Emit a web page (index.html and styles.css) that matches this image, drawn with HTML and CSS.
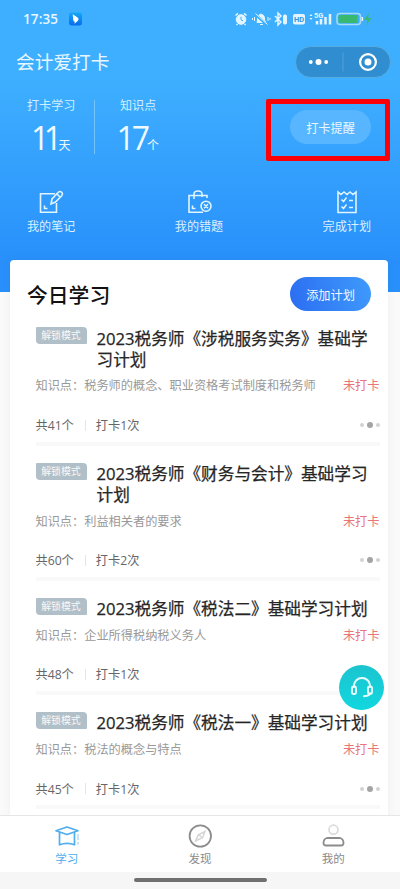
FILE: index.html
```html
<!DOCTYPE html>
<html lang="zh-CN">
<head>
<meta charset="utf-8">
<meta name="viewport" content="width=device-width">
<title>会计爱打卡</title>
<link rel="stylesheet" href="styles.css">
</head>
<body>
<main class="screen">
  <header class="hero">
    <div class="status">
      <span class="time">17:35</span>
      <svg class="app" viewBox="0 0 14 14"><defs><linearGradient id="ag" x2="0" y2="1"><stop stop-color="#12a9f8"/><stop offset="1" stop-color="#086bed"/></linearGradient></defs><rect width="14" height="14" rx="3" fill="url(#ag)"/><path d="M4 2 9 5.2 10.5 7 9 9.5 6 12 6.2 9.7 5 9.3 4.5 7.2Z" fill="#fff"/></svg>
      <svg class="signals" viewBox="0 0 140 16" fill="none" stroke="#e2f5ff">
        <circle cx="8" cy="8.5" r="4.8" fill="#e2f5ff"/><path d="M2.5 4.5 5 2.3M13.5 4.5 11 2.3M4.5 13l-1 1M11.5 13l1 1" stroke-width="1.6"/><path d="M8 5.8v3l2 1" stroke="#3eafff"/>
        <path d="M24 11.500h9L31.500 9V7q0-3-3.500-4-3.500 1-3.500 4v2z" fill="#e2f5ff"/><path d="M22 3 34 14" stroke="#3eafff" stroke-width="2.500"/><path d="M22.500 2.500 34.500 13.500M27 13.500h3M21.500 6v4M19.500 7v2M35 6v4M37 7v2"/>
        <path d="m42 5 6 6-3 3V2l3 3-6 6" stroke-width="1.500"/><rect x="50.500" y="4" width="3" height="9" rx="1" fill="#e2f5ff"/>
        <rect x="60" y="3" width="12" height="10.500" rx="2" fill="#e2f5ff" stroke="none"/><text x="60.900" y="11" class="hd">HD</text>
        <path d="m76.500 5 1.500-2 1.500 2zM76.500 7 78 9l1.500-2z" fill="#e2f5ff" stroke="none"/><text x="81" y="7.300" class="fiveg">5G</text>
        <path d="M84 13.500V10M88 13.500V8M92.500 13.500V6M97 13.500V3" stroke-width="2.500"/>
        <rect x="104" y="2.500" width="23.500" height="11" rx="3" stroke="#a6daf5" stroke-width="1.500"/><rect x="105.500" y="4" width="19" height="8" rx="1.500" fill="#39b970" stroke="none"/><path d="M129.300 6v4" stroke-width="1.500"/><path d="m136 2-5 7h3.500l-1 5 5-7H135z" fill="#39b970" stroke="none"/>
      </svg>
    </div>
    <div class="topbar">
      <h1>会计爱打卡</h1>
      <div class="capsule">
        <svg viewBox="0 0 96 32" fill="#fff"><circle cx="15.800" cy="16" r="1.900"/><circle cx="23.500" cy="16" r="3"/><circle cx="31.200" cy="16" r="1.900"/><path d="M47.500 6.500h1v19h-1z" opacity=".18"/><circle cx="73" cy="16" r="7.900" fill="none" stroke="#fff" stroke-width="2.200"/><circle cx="73" cy="16" r="3.500"/></svg>
      </div>
    </div>
    <div class="stats">
      <div class="stat days"><span>打卡学习</span><p><b>11</b>天</p></div>
      <div class="rule"></div>
      <div class="stat points"><span>知识点</span><p><b>17</b>个</p></div>
      <div class="remind">打卡提醒</div>
    </div>
    <nav class="tools">
      <div><svg viewBox="0 0 26 26"><path d="M17 4.700H2.500v18.600h16V14"/><path d="m13 15 1-5 6.300-6.700q1.700-1.600 3.400 0 1.400 1.700 0 3.400L17.500 13zM19 5l3 3"/><path d="M6.500 16.500v3h3"/></svg>我的笔记</div>
      <div><svg viewBox="0 0 26 26"><path d="M21 9V6.500H3v16.800h14M8 10V5q0-3 4-3t4 3v3"/><circle cx="20" cy="17.200" r="5"/><path d="m18 15.200 4 4m0-4-4 4M6.500 16.500v3h3"/></svg>我的错题</div>
      <div><svg viewBox="0 0 26 26"><path d="M4 3v20.500h18V3l-3 2.500L16 3l-3 2.500L10 3 7 5.500ZM7.500 10.500l2 2 3-4M7.500 17.500l2 2 3-4M15 11.500h4M15 18.500h4"/></svg>完成计划</div>
    </nav>
    <div class="highlight"></div>
  </header>

  <section class="card">
    <div class="cardhead"><h2>今日学习</h2><div class="add">添加计划</div></div>
    <article>
      <div class="head"><span class="tag">解锁模式</span><h3>2023税务师《涉税服务实务》基础学习计划</h3></div>
      <div class="desc"><span>知识点：税务师的概念、职业资格考试制度和税务师</span><em>未打卡</em></div>
      <div class="foot"><span>共41个</span><i></i><span>打卡1次</span><div class="dots"><u></u><u></u><u></u></div></div>
    </article>
    <article>
      <div class="head"><span class="tag">解锁模式</span><h3>2023税务师《财务与会计》基础学习计划</h3></div>
      <div class="desc"><span>知识点：利益相关者的要求</span><em>未打卡</em></div>
      <div class="foot"><span>共60个</span><i></i><span>打卡2次</span><div class="dots"><u></u><u></u><u></u></div></div>
    </article>
    <article>
      <div class="head"><span class="tag">解锁模式</span><h3>2023税务师《税法二》基础学习计划</h3></div>
      <div class="desc"><span>知识点：企业所得税纳税义务人</span><em>未打卡</em></div>
      <div class="foot"><span>共48个</span><i></i><span>打卡1次</span></div>
    </article>
    <article>
      <div class="head"><span class="tag">解锁模式</span><h3>2023税务师《税法一》基础学习计划</h3></div>
      <div class="desc"><span>知识点：税法的概念与特点</span><em>未打卡</em></div>
      <div class="foot"><span>共45个</span><i></i><span>打卡1次</span><div class="dots"><u></u><u></u><u></u></div></div>
    </article>
  </section>

  <div class="service"><svg viewBox="0 0 24 24" fill="none" stroke="#e9ffff" stroke-width="1.900"><path d="M4 11V9.500a8 7.500 0 0 1 16 0V11M20 17q0 3-6 3.200" stroke-linecap="round"/><rect x="2" y="10.500" width="4" height="7.500" rx="1.500"/><rect x="18" y="10.500" width="4" height="7.500" rx="1.500"/></svg></div>

  <footer class="bottom">
    <div class="tabs">
      <div class="tab on"><svg viewBox="0 0 26 26" fill="none" stroke="#50aeee" stroke-width="1.700" stroke-linejoin="round"><path d="M2 7.800 13 4l11 3.800L13 11.500ZM5.500 9.500v12.300q7.500-3 15 0V9.500"/><path d="M24 11v6m0 2v2.500" stroke="#b5dbf7" stroke-width="1.500"/></svg>学习</div>
      <div class="tab"><svg viewBox="0 0 26 26" fill="none" stroke="#8c8c8c" stroke-width="1.800"><circle cx="13.300" cy="13" r="10.700"/><path d="m18 8.500-2.500 6.300-7 3.200 2.800-6.300ZM12 12l2.500 2" stroke="#d5d5d5" stroke-width="1.500"/></svg>发现</div>
      <div class="tab"><svg viewBox="0 0 26 26" fill="none" stroke="#8c8c8c" stroke-width="1.800"><circle cx="13.500" cy="6.700" r="4.500" stroke="#dcdcdc"/><path d="M7 15h13q3.500 1 3.500 5 0 2.500-2.500 2.500H6Q3.500 22.500 3.500 20q0-4 3.500-5Z"/></svg>我的</div>
    </div>
    <div class="home"></div>
  </footer>
</main>
</body>
</html>
```
FILE: styles.css
```css
* { box-sizing: border-box; margin: 0; padding: 0; }
body { width: 400px; height: 889px; overflow: hidden; background: #fafafa; font-family: "Noto Sans CJK SC", sans-serif; }
.screen { position: relative; width: 400px; height: 889px; overflow: hidden; }
.hero { position: relative; height: 292px; background: linear-gradient(#3eafff 0, #3eafff 80px, #2990fb 260px); color: #e8f7ff; }
.status { height: 38px; padding: 0 27px 0 23px; display: flex; align-items: center; }
.time { font: 600 13.500px/20px "Open Sans", sans-serif; width: 46px; letter-spacing: .1px; }
.app { width: 13px; height: 14px; }
.signals { width: 140px; height: 16px; margin-left: auto; }
.hd { font: 700 7.500px Roboto, sans-serif; fill: #3097df; stroke: none; }
.fiveg { font: 700 7.500px Roboto, sans-serif; fill: #e2f5ff; stroke: none; }
.topbar { height: 47px; padding: 0 9px 0 16px; display: flex; align-items: center; justify-content: space-between; }
h1 { font-size: 18.700px; font-weight: 400; line-height: 26px; margin-top: -2px; }
.capsule { width: 96px; height: 32px; border-radius: 16px; background: #2f8dd0; border: 1px solid #56acdf; }
.capsule svg { display: block; width: 96px; height: 32px; margin: -1px; }
.stats { height: 100px; padding: 11px 29px 0 27px; display: flex; align-items: flex-start; }
.stat span { display: block; font-size: 12.100px; line-height: 18px; color: #d2efff; }
.stat p { font-size: 12px; line-height: 44px; white-space: nowrap; color: #effaff; margin-top: 1.500px; }
.stat b { font: 400 32px/44px "Open Sans", sans-serif; }
.days { width: 67px; }
.days p { padding-left: 4px; }
.days b { letter-spacing: -5.500px; margin-right: 2px; }
.rule { width: 1px; height: 54px; margin-top: 4px; background: #73c3fc; }
.points { padding-left: 25px; }
.points p { margin-left: -3.500px; }
.points b { letter-spacing: -3px; margin-right: 0; }
.remind { width: 81px; height: 34px; margin: 14px 0 0 auto; border-radius: 17px; background: #58b5ff; font-size: 12.200px; line-height: 36px; text-align: center; }
.tools { display: flex; justify-content: space-between; padding: 4px 29px 0 27px; }
.tools div { display: flex; flex-direction: column; align-items: center; font-size: 12.100px; line-height: 18px; color: #daf1ff; }
.tools svg { width: 26px; height: 26px; margin-bottom: 2px; fill: none; stroke: #dff5ff; stroke-width: 1.600; }
.highlight { position: absolute; left: 266px; top: 99px; width: 124px; height: 62px; border: 5px solid #fb0006; border-radius: 2px; }
.card { position: relative; width: 378px; height: 600px; margin: -32px 0 0 10px; padding: 17px 8.500px 0 25.500px; background: #fff; border-radius: 4px; box-shadow: 0 0 10px rgba(0,0,0,.05); font-family: "Open Sans", "Noto Sans CJK SC", sans-serif; }
.cardhead { display: flex; justify-content: space-between; height: 50.400px; padding-right: 8.500px; margin-left: -8.500px; }
h2 { font-size: 20.800px; line-height: 36px; font-weight: 500; color: #111; }
.add { width: 81px; height: 34px; border-radius: 17px; background: linear-gradient(75deg, #2b6df1, #3f9bfc); color: #f1f8ff; font-size: 12.200px; line-height: 37px; text-align: center; }
article { border-bottom: 4px solid #f9f9f9; margin-bottom: 17px; }
.head { display: flex; align-items: flex-start; }
.tag { flex: none; width: 51px; height: 17px; margin-right: 10px; background: #b1bfc8; color: #f8fafb; border-radius: 1px 4px 1px 4px; font-size: 9.900px; line-height: 17px; text-align: center; }
h3 { width: 274px; font-size: 16.650px; line-height: 21px; font-weight: 400; -webkit-text-stroke: .25px #262626; color: #262626; padding-top: .3px; margin-bottom: -.3px; }
.desc { display: flex; justify-content: space-between; height: 30.700px; padding-top: 7px; font-size: 12.200px; line-height: 20px; color: #999; white-space: nowrap; }
.desc em { font-style: normal; color: #e87577; }
.foot { display: flex; align-items: center; height: 41.500px; padding-top: 8.500px; font-size: 12.200px; line-height: 20px; color: #666; }
.foot span { padding-top: 2px; }
.foot i { width: 1px; height: 11px; margin: 0 10px 0 11px; background: #e5e5e5; }
.dots { display: flex; align-items: center; gap: 3px; margin-left: auto; }
.dots u { width: 4px; height: 4px; border-radius: 50%; background: #d2d2d2; }
.dots u:nth-child(2) { width: 6px; height: 6px; background: #a4a4a4; }
.service { position: absolute; left: 339px; top: 665px; width: 45px; height: 45px; border-radius: 50%; background: linear-gradient(#1bc4cf, #11d7df); display: grid; place-items: center; }
.service svg { width: 24px; height: 24px; }
.bottom { position: absolute; left: 0; bottom: 0; width: 400px; height: 74px; background: #f6f6f6; border-top: 1px solid #e6e6e6; }
.tabs { display: flex; height: 56px; background: #fff; justify-content: space-around; }
.tab { width: 133.300px; padding-top: 7px; display: flex; flex-direction: column; align-items: center; font-size: 11.500px; line-height: 18px; color: #8b8b8b; }
.tab svg { width: 26px; height: 26px; }
.on { color: #50aeee; }
.home { width: 133px; height: 4px; margin: 6px auto 0; border-radius: 2px; background: #707070; }
```
